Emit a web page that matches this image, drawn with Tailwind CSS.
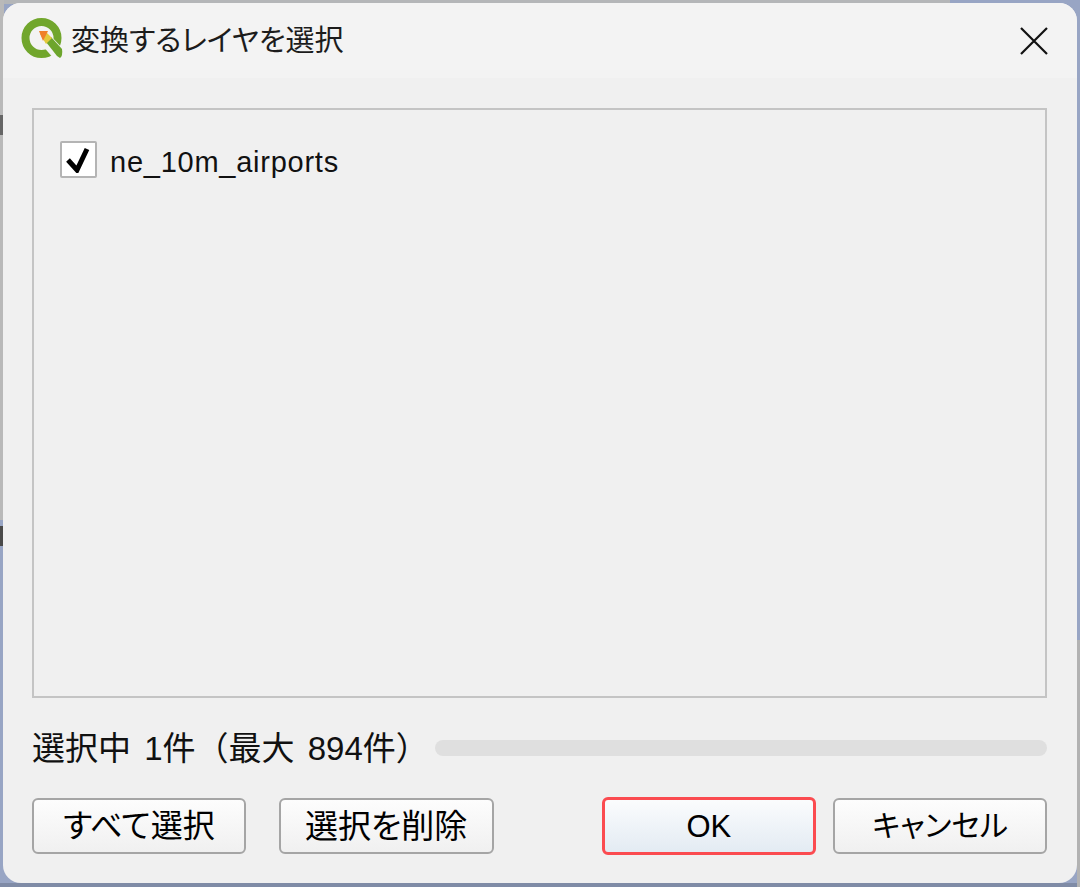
<!DOCTYPE html>
<html>
<head>
    <meta charset="utf-8">
    <title>変換するレイヤを選択</title>
    <script src="https://cdn.jsdelivr.net/npm/@tailwindcss/browser@4"></script>
</head>
<body class="relative w-[1080px] h-[887px] overflow-hidden bg-[#98a5c4] font-['Liberation_Sans','Noto_Sans_CJK_JP',sans-serif] text-black">
    <!-- desktop showing behind the dialog -->
    <div class="absolute left-0 top-0 w-[950px] h-[4px] bg-[#b4b6b8]"></div>
    <div class="absolute left-0 top-0 w-[4px] h-[520px] bg-[#b9b9b9]"></div>
    <div class="absolute left-0 top-[115px] w-[4px] h-[20px] bg-[#666666]"></div>
    <div class="absolute left-0 top-[526px] w-[4px] h-[20px] bg-[#4a4a4a]"></div>
    <div class="absolute left-0 bottom-0 w-[1080px] h-[4px] bg-[#7f8ba6]"></div>
    <div class="absolute right-0 top-[640px] w-[3px] h-[247px] bg-[#b2b2b2]"></div>

    <div class="relative ml-[3px] mt-[3px] w-[1074px] h-[880px] rounded-[18px] bg-[#f0f0f0] overflow-hidden flex flex-col">
        <!-- title bar -->
        <div class="h-[75px] shrink-0 bg-[#f3f3f3] flex items-center pl-[16px] pr-[29px]">
            <svg class="w-[46px] h-[46px] shrink-0" viewBox="0 0 46 46">
                <circle cx="22.5" cy="20" r="16" fill="none" stroke="#71a62c" stroke-width="8"/>
                <path d="M22 26 L31 17 L46 33 L46 42 L36 42 Z" fill="#f3f3f3"/>
                <path d="M27 24 L32 19 L43 31 Q44 38 41 40 L38 38 Z" fill="#6da52c"/>
                <path d="M21 16 L27 14 L33 20 L27 26 Z" fill="#e3c93c"/>
                <path d="M20 13 L29 13 L24 23 Z" fill="#f0802a"/>
            </svg>
            <span class="ml-[6px] pt-[2px] text-[29px] leading-none text-[#1c1c1c] [font-feature-settings:'palt']">変換するレイヤを選択</span>
            <svg class="ml-auto w-[28px] h-[28px]" viewBox="0 0 28 28">
                <path d="M1 1 L27 27 M27 1 L1 27" stroke="#111" stroke-width="2.2" fill="none"/>
            </svg>
        </div>

        <div class="flex-1 flex flex-col pl-[29px] pr-[30px] pt-[30px]">
            <!-- layer list -->
            <div class="h-[590px] border-2 border-[#c4c4c4] pl-[26px] pt-[31px]">
                <div class="flex items-center">
                    <span class="w-[37px] h-[37px] border-2 border-[#b4b4b4] rounded-[2px] bg-white flex items-center justify-center">
                        <svg class="w-[26px] h-[26px]" viewBox="0 0 26 26">
                            <path d="M2 13 L11 23 L21 2" stroke="#000" stroke-width="5" fill="none"/>
                        </svg>
                    </span>
                    <span class="ml-[13px] pt-[5px] text-[29px] leading-none tracking-[0.75px] text-[#111]">ne_10m_airports</span>
                </div>
            </div>

            <!-- status -->
            <div class="mt-[30px] h-[40px] flex items-center">
                <span class="w-[403px] shrink-0 text-[33px] leading-none whitespace-nowrap [word-spacing:4px] text-[#111]">選択中 1件（最大 894件）</span>
                <div class="flex-1 h-[16px] rounded-full bg-[#dfdfdf]"></div>
            </div>

            <!-- buttons -->
            <div class="mt-[29px] flex items-center">
                <button class="w-[214px] h-[56px] border-2 border-[#a5a5a5] rounded-[6px] bg-linear-to-b from-[#fdfdfd] to-[#f0f0f0] text-[32px] leading-none [font-feature-settings:'palt']">すべて選択</button>
                <button class="ml-[33px] w-[215px] h-[56px] border-2 border-[#a5a5a5] rounded-[6px] bg-linear-to-b from-[#fdfdfd] to-[#f0f0f0] text-[33px] leading-none [font-feature-settings:'palt']">選択を削除</button>
                <button class="ml-[108px] w-[215px] h-[58px] border-[3px] border-[#fb4b50] rounded-[6px] bg-linear-to-b from-[#fbfcfd] to-[#e3ebf3] text-[31px] leading-none">OK</button>
                <button class="ml-[17px] w-[214px] h-[56px] border-2 border-[#a5a5a5] rounded-[6px] bg-linear-to-b from-[#fdfdfd] to-[#f0f0f0] text-[30px] leading-none [font-feature-settings:'palt']">キャンセル</button>
            </div>
        </div>
    </div>
</body>
</html>
